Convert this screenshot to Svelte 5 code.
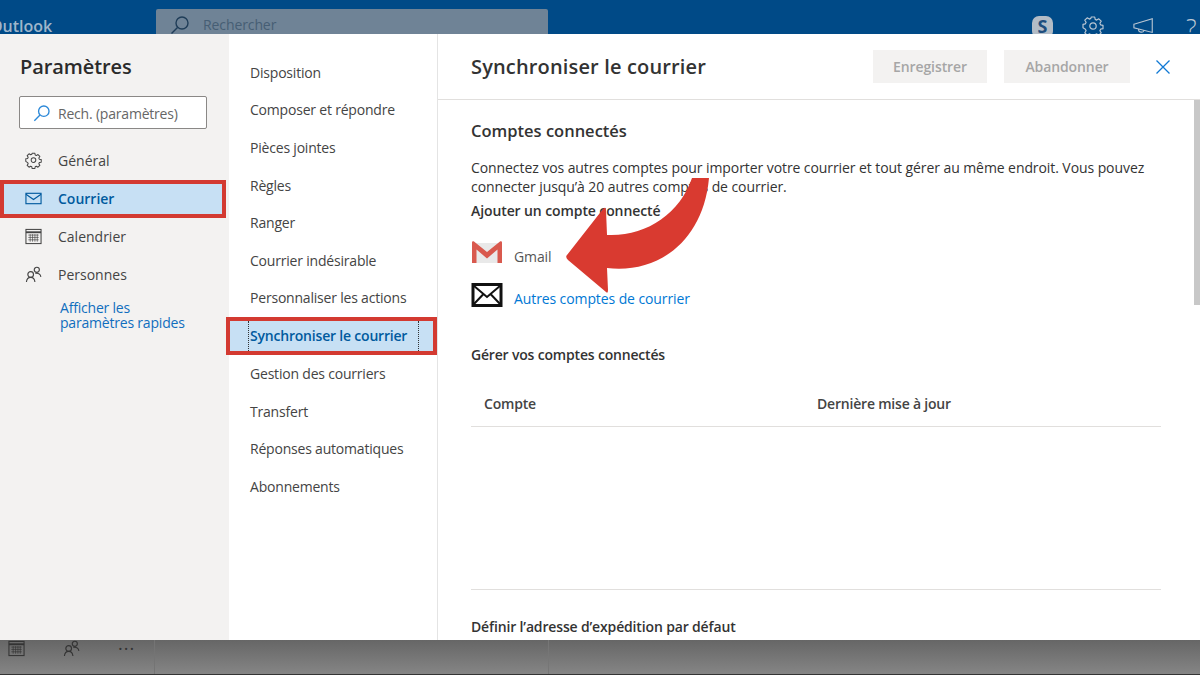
<script>
  const mainNav = [
    { label: 'Général', icon: 'gear' },
    { label: 'Courrier', icon: 'mail', active: true },
    { label: 'Calendrier', icon: 'cal' },
    { label: 'Personnes', icon: 'people' }
  ]
  const subNav = [
    'Disposition',
    'Composer et répondre',
    'Pièces jointes',
    'Règles',
    'Ranger',
    'Courrier indésirable',
    'Personnaliser les actions',
    'Synchroniser le courrier',
    'Gestion des courriers',
    'Transfert',
    'Réponses automatiques',
    'Abonnements'
  ]
  const gearPath = 'M8.300 1h3.400l.5 2.400 1.500.7 2.100-1.300 2.400 2.400-1.300 2.100.7 1.500 2.400.5v3.400l-2.400.5-.7 1.500 1.300 2.100-2.400 2.400-2.100-1.300-1.500.7-.5 2.400H8.300l-.5-2.400-1.500-.7-2.100 1.300-2.400-2.400 1.300-2.100-.7-1.500L0 11.700V8.300l2.400-.5.7-1.500-1.300-2.100 2.400-2.400 2.100 1.300 1.500-.7z'
</script>

{#snippet peopleIcon()}
  <svg class="ico" viewBox="0 0 18 18" fill="none" stroke="currentColor" stroke-width="1.200">
    <circle cx="6" cy="9" r="3" />
    <path d="M1.500 17c.3-3 2-5 4.500-5s4.200 2 4.500 5" />
    <circle cx="12.500" cy="4" r="2.700" />
    <path d="M11 8c2.500-1 5.500.5 5.800 3.500" />
  </svg>
{/snippet}

{#snippet calIcon()}
  <svg class="ico" viewBox="0 0 18 18" fill="none" stroke="currentColor" stroke-width="1.100">
    <rect x="1" y="1.500" width="16" height="15" />
    <path d="M1 4.500h16" stroke-width="2" />
    <path d="M3.500 7.500h11M3.500 10h11M3.500 12.500h11M5.500 6.500v8M8 6.500v8M10.500 6.500v8M13 6.500v8" stroke-width="1" opacity="0.7" />
  </svg>
{/snippet}

<div class="page">
  <header class="topbar">
    <span class="brand">Outlook</span>
    <div class="topsearch">
      <svg viewBox="0 0 20 20" fill="none" stroke="#1f3d58" stroke-width="1.400">
        <circle cx="12" cy="8" r="6" />
        <path d="M7.500 12.500 1.500 18.500" />
      </svg>
      <span>Rechercher</span>
    </div>
    <div class="topicons">
      <span class="skype">S</span>
      <svg viewBox="0 0 20 20" fill="none" stroke="#b9c6d3" stroke-width="1.200">
        <path d={gearPath} stroke-linejoin="round" />
        <circle cx="10" cy="10" r="3.200" />
      </svg>
      <svg viewBox="0 0 24 20" fill="none" stroke="#b9c6d3" stroke-width="1.200">
        <path d="M1 8l20-6v15L1 12zM6 13.500c0 4 5 4 6 1.500" />
      </svg>
      <span class="help">?</span>
    </div>
  </header>

  <div class="modal">
    <aside class="side">
      <h1>Paramètres</h1>
      <div class="search">
        <svg viewBox="0 0 20 20" fill="none" stroke="#2b88d8" stroke-width="1.500">
          <circle cx="12" cy="8" r="5.800" />
          <path d="M7.800 12.200 1.500 18.500" />
        </svg>
        <span>Rech. (paramètres)</span>
      </div>
      <nav class="mainnav">
        {#each mainNav as item}
          <div class="mainitem" class:active={item.active}>
            {#if item.icon === 'gear'}
              <svg class="ico" viewBox="-1 0 22 21" fill="none" stroke="currentColor" stroke-width="1.300">
                <path d={gearPath} stroke-linejoin="round" />
                <circle cx="10" cy="10" r="3" />
              </svg>
            {:else if item.icon === 'mail'}
              <svg class="ico" viewBox="0 0 18 18" fill="none" stroke="currentColor" stroke-width="1.200">
                <rect x="1" y="3.500" width="16" height="11" />
                <path d="M1 4.500l8 5.500 8-5.500" />
              </svg>
            {:else if item.icon === 'cal'}
              {@render calIcon()}
            {:else}
              {@render peopleIcon()}
            {/if}
            <span>{item.label}</span>
          </div>
        {/each}
      </nav>
      <a class="quick" href="#quick">Afficher les<br />paramètres rapides</a>
    </aside>

    <nav class="subnav">
      {#each subNav as item, i}
        <div class="subitem" class:active={i === 7}><span>{item}</span></div>
      {/each}
    </nav>

    <main class="panel">
      <div class="panelhead">
        <h2>Synchroniser le courrier</h2>
        <div class="actions">
          <button disabled>Enregistrer</button>
          <button disabled>Abandonner</button>
          <svg class="close" viewBox="0 0 14 14" fill="none" stroke="#0f78d4" stroke-width="1.300">
            <path d="M.5.500l13 13M13.500.500l-13 13" />
          </svg>
        </div>
      </div>
      <div class="panelbody">
        <h3>Comptes connectés</h3>
        <p>Connectez vos autres comptes pour importer votre courrier et tout gérer au même endroit. Vous pouvez connecter jusqu’à 20 autres comptes de courrier.</p>
        <h4>Ajouter un compte connecté</h4>
        <div class="provider gmail">
          <svg viewBox="0 0 32 24">
            <path d="M2 3h28v20H2z" fill="#e9e9e9" />
            <path d="M1 23V2.500c0-1 1-1.500 2-1l13 10.500L29 1.500c1-.5 2 0 2 1V23h-4.500V9.500L16 18.500 5.500 9.500V23z" fill="#d9594e" />
          </svg>
          <span>Gmail</span>
        </div>
        <div class="provider other">
          <svg viewBox="0 0 32 24" fill="#fff" stroke="#111">
            <rect x="2" y="1.500" width="28" height="21" stroke-width="3" />
            <path d="M2.500 2.500L16 14 29.500 2.500M2.500 21.500l10-10.500M29.500 21.500l-10-10.500" fill="none" stroke-width="2" />
          </svg>
          <a href="#other">Autres comptes de courrier</a>
        </div>
        <h4 class="manage">Gérer vos comptes connectés</h4>
        <div class="tablehead">
          <span>Compte</span>
          <span>Dernière mise à jour</span>
        </div>
        <div class="tableempty"></div>
        <h4 class="default">Définir l’adresse d’expédition par défaut</h4>
      </div>
      <div class="scrollthumb"></div>
    </main>

    <svg class="arrow" viewBox="0 0 1200 606">
      <path d="M567 221 Q565 223 568 226 L606 258 Q608 260 608 256 L607 234 C655 240 703 210 709 144 L692 144 C680 180 645 203 607 201 L606 176 Q606 172 603 175 Z" fill="#d93a30" />
    </svg>
  </div>

  <footer class="dock">
    <div class="docktools">
      <span class="dockicon">{@render calIcon()}</span>
      <span class="dockicon">{@render peopleIcon()}</span>
      <span class="dots">···</span>
    </div>
    <div class="dockmid"></div>
  </footer>
</div>

<style>
  :global(body) {
    margin: 0;
    overflow: hidden;
  }

  .page {
    width: 1200px;
    height: 675px;
    display: flex;
    flex-direction: column;
    font-family: "Open Sans", "Noto Sans", sans-serif;
    color: #333;
    overflow: hidden;
  }

  .topbar {
    height: 34px;
    flex: none;
    background: #004a87;
    position: relative;
    display: flex;
    overflow: hidden;
  }

  .brand {
    margin: 15px 0 0 -10px;
    width: 166px;
    flex: none;
    font-size: 16px;
    font-weight: 600;
    color: #9fb6cb;
    line-height: 22px;
  }

  .topsearch {
    width: 392px;
    height: 40px;
    margin-top: 9px;
    background: #6f8396;
    border-radius: 2px;
    display: flex;
    padding-left: 14px;
    box-sizing: border-box;
    color: #465e74;
    font-size: 14px;
    gap: 13px;
  }

  .topsearch svg {
    width: 20px;
    height: 20px;
    margin-top: 6px;
  }

  .topsearch span {
    margin-top: 6px;
    letter-spacing: -0.1px;
  }

  .topicons {
    margin-left: auto;
    padding: 16px 0 0;
    display: flex;
    gap: 29px;
    align-items: flex-start;
    width: 168px;
    box-sizing: border-box;
  }

  .topicons svg {
    width: 22px;
    height: 20px;
    flex: none;
  }

  .skype {
    width: 21px;
    height: 22px;
    border-radius: 7px;
    background: #b3bcc6;
    color: #1f4e7e;
    font-size: 18px;
    font-weight: 700;
    text-align: center;
    line-height: 21px;
    flex: none;
  }

  .help {
    color: #b9c6d3;
    font-size: 25px;
    line-height: 22px;
    font-weight: 300;
    margin-left: 2px;
  }

  .modal {
    height: 606px;
    flex: none;
    display: flex;
    background: #fff;
    position: relative;
  }

  .side {
    width: 229px;
    flex: none;
    background: #f3f2f1;
    box-sizing: border-box;
    padding-top: 19px;
  }

  h1 {
    margin: 0 0 0 20px;
    font-size: 20px;
    font-weight: 600;
    line-height: 28px;
    color: #2b2b2b;
    letter-spacing: -0.1px;
  }

  .search {
    margin: 15px 0 0 19px;
    width: 188px;
    height: 33px;
    box-sizing: border-box;
    background: #fff;
    border: 1px solid #8a8886;
    border-radius: 2px;
    display: flex;
    align-items: center;
    padding: 1px 0 0 13px;
    gap: 7px;
    font-size: 14px;
    letter-spacing: -0.2px;
    color: #666;
  }

  .search svg {
    width: 18px;
    height: 18px;
  }

  .mainnav {
    margin-top: 12.500px;
  }

  .mainitem {
    height: 38px;
    display: flex;
    align-items: center;
    padding-left: 25px;
    gap: 16px;
    font-size: 14px;
    color: #444;
    box-sizing: border-box;
  }

  .mainitem.active {
    width: 226px;
    background: #c7e0f4;
    border: 4px solid #d33a31;
    padding-left: 21px;
    color: #005a9e;
    font-weight: 600;
  }

  .ico {
    width: 17px;
    height: 17px;
    flex: none;
  }

  .quick {
    display: block;
    margin: 6.500px 0 0 60px;
    font-size: 14px;
    line-height: 15px;
    letter-spacing: -0.2px;
    color: #106ebe;
    text-decoration: none;
  }

  .subnav {
    width: 209px;
    flex: none;
    box-sizing: border-box;
    padding-top: 19.500px;
    border-right: 1px solid #e4e4e4;
  }

  .subitem {
    height: 37.600px;
    display: flex;
    align-items: center;
    padding-left: 21px;
    font-size: 14px;
    letter-spacing: -0.2px;
    color: #444;
    box-sizing: border-box;
  }

  .subitem.active {
    background: #c7e0f4;
    border: 4px solid #d33a31;
    width: 211px;
    margin-left: -3px;
    height: 38px;
    padding-left: 18px;
    color: #005a9e;
    font-weight: 600;
  }

  .subitem.active span {
    border-left: 1px dotted #333;
    border-right: 1px dotted #333;
    padding: 0 11px 0 1px;
    line-height: 30px;
  }

  .panel {
    flex: 1;
    min-width: 0;
    position: relative;
    display: flex;
    flex-direction: column;
    overflow: hidden;
  }

  .panelhead {
    height: 66px;
    flex: none;
    box-sizing: border-box;
    border-bottom: 1px solid #e1dfdd;
    display: flex;
    align-items: center;
    padding: 0 30px 0 33px;
  }

  h2 {
    margin: 0;
    font-size: 20px;
    font-weight: 600;
    letter-spacing: 0.15px;
    color: #333;
  }

  .actions {
    margin-left: auto;
    display: flex;
    align-items: center;
    gap: 17px;
  }

  button {
    height: 33px;
    width: 114px;
    padding: 0;
    border: none;
    background: #f3f2f1;
    color: #a6a6a6;
    font: 600 14px "Open Sans", sans-serif;
    letter-spacing: -0.1px;
  }

  button:last-of-type {
    width: 126px;
  }

  .close {
    width: 14px;
    height: 14px;
    margin-left: 9px;
  }

  .panelbody {
    padding: 20px 39px 0 33px;
  }

  h3 {
    margin: 0;
    font-size: 16.500px;
    font-weight: 600;
    line-height: 22px;
    color: #333;
  }

  p {
    margin: 16px 0 0;
    font-size: 14px;
    line-height: 19px;
    letter-spacing: -0.08px;
    color: #333;
  }

  h4 {
    margin: 5px 0 0;
    font-size: 14px;
    font-weight: 600;
    line-height: 19px;
    letter-spacing: -0.1px;
    color: #333;
  }

  .provider {
    display: flex;
    align-items: center;
    gap: 10px;
    font-size: 14px;
    color: #555;
    height: 32px;
  }

  .provider svg {
    width: 32px;
    height: 24px;
    flex: none;
  }

  .provider span,
  .provider a {
    margin-top: 8px;
    letter-spacing: -0.1px;
  }

  .gmail {
    margin-top: 16px;
  }

  .gmail span {
    margin-left: 1px;
  }

  .other {
    margin-top: 10.500px;
  }

  .provider a {
    color: #0078d4;
    text-decoration: none;
    margin-left: 1px;
  }

  h4.manage {
    margin-top: 34.500px;
    letter-spacing: -0.18px;
  }

  .tablehead {
    margin-top: 17.500px;
    height: 45px;
    box-sizing: border-box;
    border-bottom: 1px solid #e1dfdd;
    display: flex;
    align-items: center;
    padding-left: 13px;
    font-size: 14px;
    font-weight: 600;
    letter-spacing: -0.2px;
    color: #444;
  }

  .tablehead span:first-child {
    width: 333px;
  }

  .tableempty {
    height: 162px;
    border-bottom: 1px solid #e1dfdd;
  }

  h4.default {
    margin-top: 27px;
    letter-spacing: -0.15px;
  }

  .scrollthumb {
    position: absolute;
    right: 0;
    top: 66px;
    width: 6px;
    height: 205px;
    background: #c8c8c8;
  }

  .arrow {
    position: absolute;
    left: 0;
    top: 0;
    width: 1200px;
    height: 606px;
    pointer-events: none;
  }

  .dock {
    height: 35px;
    flex: none;
    box-sizing: border-box;
    background: linear-gradient(#666, #858585);
    border-bottom: 1px solid #333;
    overflow: hidden;
    display: flex;
  }

  .docktools {
    width: 155px;
    flex: none;
    box-sizing: border-box;
    border-right: 1px solid #747474;
    display: flex;
    color: #333;
  }

  .dockmid {
    width: 393px;
    flex: none;
    border-right: 1px solid #767676;
  }

  .dockicon {
    margin: 0 0 0 8px;
    width: 47px;
  }

  .dockicon :global(svg) {
    width: 17px;
    height: 17px;
  }

  .dots {
    font-size: 18px;
    line-height: 16px;
    margin-left: 8px;
    letter-spacing: 1px;
  }
</style>
